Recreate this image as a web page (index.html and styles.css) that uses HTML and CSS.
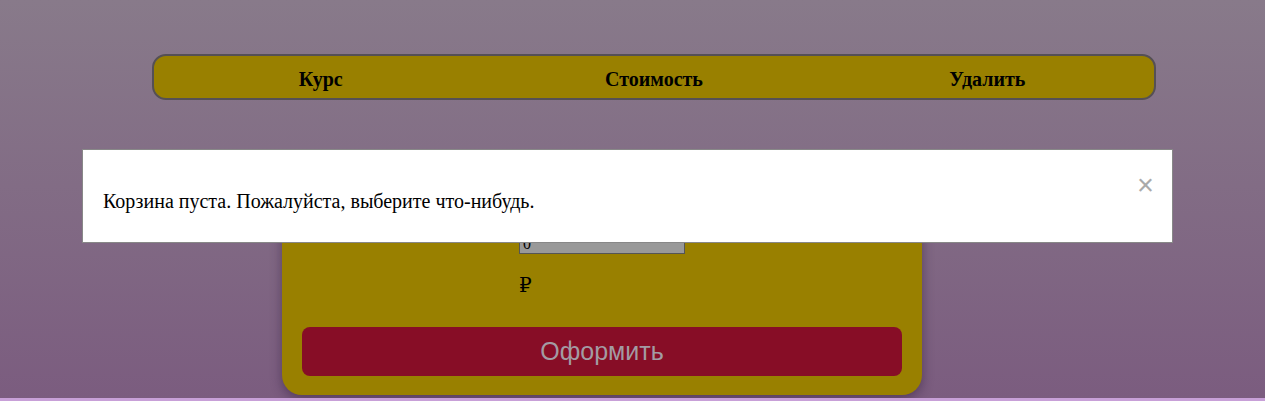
FILE: index.html
```html
<!DOCTYPE html>
<html lang="ru">
<head>
<meta charset="utf-8">
<title>Корзина</title>
<link rel="stylesheet" href="styles.css">
</head>
<body>
<div class="page">
  <div class="table-head">
    <div class="col">Курс</div>
    <div class="col">Стоимость</div>
    <div class="col">Удалить</div>
  </div>
  <div class="card">
    <div class="total-spacer"></div>
    <input class="sum" type="text" value="0">
    <div class="currency">₽</div>
    <button class="order">Оформить</button>
  </div>
</div>
<div class="footer-line"></div>
<div class="modal">
  <p class="modal-text">Корзина пуста. Пожалуйста, выберите что-нибудь.</p>
  <span class="close">×</span>
</div>
</body>
</html>
```

FILE: styles.css
```css
html, body {
  margin: 0;
  padding: 0;
  height: 401px;
  overflow: hidden;
}
body {
  background: linear-gradient(to bottom, #887a8a 0%, #7b5c7f 100%);
  font-family: "Liberation Serif", "Times New Roman", serif;
  position: relative;
}
.page {
  height: 398px;
  padding-top: 54px;
  box-sizing: border-box;
}
.table-head {
  margin-left: 152px;
  width: 1004px;
  height: 46px;
  box-sizing: border-box;
  border: 2px solid #555055;
  border-radius: 14px;
  background: #998000;
  display: grid;
  grid-template-columns: 1fr 1fr 1fr;
  align-items: center;
}
.col {
  text-align: center;
  font-weight: bold;
  font-size: 20px;
  color: #000;
  padding-top: 4px;
}
.card {
  margin-left: 282px;
  width: 640px;
  margin-top: 81px;
  box-sizing: border-box;
  background: #998000;
  border-radius: 20px;
  padding: 20px 20px 19px 20px;
  box-shadow: 0 4px 12px rgba(40, 20, 50, 0.45);
  display: flex;
  flex-direction: column;
  align-items: flex-start;
}
.total-spacer {
  height: 32px;
}
.sum {
  margin-left: 217px;
  width: 166px;
  height: 21px;
  box-sizing: border-box;
  background: #999999;
  border: 1px solid #555555;
  padding: 0 3px;
  font-family: "Liberation Serif", serif;
  font-size: 16px;
  color: #000;
  line-height: 19px;
}
.currency {
  margin-left: 217px;
  margin-top: 20px;
  font-family: "DejaVu Serif", serif;
  font-size: 20px;
  height: 22px;
  line-height: 22px;
}
.order {
  margin-top: 31px;
  width: 600px;
  height: 49px;
  border: none;
  border-radius: 8px;
  background: #870d26;
  color: #a39ba3;
  font-family: "Liberation Sans", Arial, sans-serif;
  font-size: 25px;
  padding: 0;
}
.footer-line {
  height: 3px;
  background: #c8a0d8;
}
.modal {
  position: absolute;
  left: 82px;
  top: 149px;
  width: 1091px;
  height: 94px;
  box-sizing: border-box;
  background: #fff;
  border: 1px solid #888888;
  padding: 0 20px;
}
.modal-text {
  margin: 40px 0 0 0;
  font-size: 20px;
  color: #000;
}
.close {
  position: absolute;
  right: 18px;
  top: 19px;
  color: #aaaaaa;
  font-family: "Liberation Sans", Arial, sans-serif;
  font-size: 29px;
  line-height: 32px;
}
```
